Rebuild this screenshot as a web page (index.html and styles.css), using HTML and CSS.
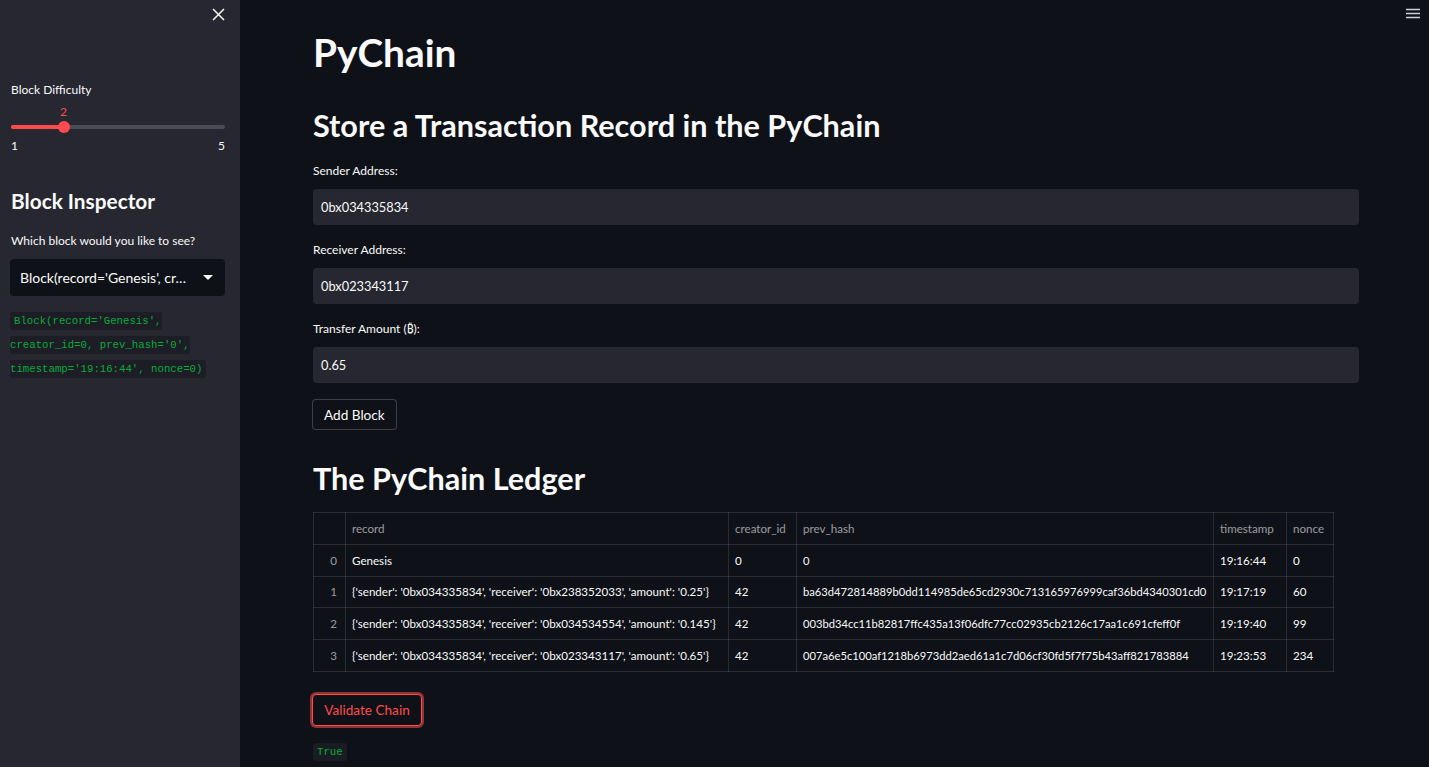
FILE: index.html
```html
<!DOCTYPE html>
<html>
<head>
<meta charset="utf-8">
<link rel="stylesheet" href="styles.css">
</head>
<body>
<div class="app">
  <aside class="sidebar">
    <div class="side-top">
      <svg class="close" width="13" height="13" viewBox="0 0 13 13"><path d="M1 1 L12 12 M12 1 L1 12" stroke="#fafafa" stroke-width="1.5" fill="none"/></svg>
    </div>
    <div class="label">Block Difficulty</div>
    <div class="slider">
      <div class="slider-value">2</div>
      <div class="track"><div class="fill"></div><div class="thumb"></div></div>
      <div class="ticks"><span>1</span><span>5</span></div>
    </div>
    <h3 class="side-h">Block Inspector</h3>
    <div class="label">Which block would you like to see?</div>
    <div class="select">
      <span class="select-text">Block(record='Genesis', cr…</span>
      <svg width="10" height="6" viewBox="0 0 10 6"><path d="M0 0 L10 0 L5 5 Z" fill="#fafafa"/></svg>
    </div>
    <div class="side-code"><code class="inline-code">Block(record='Genesis', creator_id=0, prev_hash='0', timestamp='19:16:44', nonce=0)</code></div>
  </aside>
  <main class="main">
    <svg class="menu" width="14" height="11" viewBox="0 0 14 11"><path d="M0 1.5 H14 M0 5.5 H14 M0 9.5 H14" stroke="#cfd0d3" stroke-width="1.6"/></svg>
    <div class="content">
      <h1 class="title">PyChain</h1>
      <h2 class="h2">Store a Transaction Record in the PyChain</h2>
      <div class="field first">
        <div class="label">Sender Address:</div>
        <div class="input">0bx034335834</div>
      </div>
      <div class="field">
        <div class="label">Receiver Address:</div>
        <div class="input">0bx023343117</div>
      </div>
      <div class="field">
        <div class="label">Transfer Amount (₿):</div>
        <div class="input">0.65</div>
      </div>
      <button class="btn">Add Block</button>
      <h2 class="h2 ledger">The PyChain Ledger</h2>
      <table class="df">
        <colgroup>
          <col class="w-idx"><col class="w-rec"><col class="w-cid"><col class="w-hash"><col class="w-ts"><col class="w-n">
        </colgroup>
        <thead>
          <tr><th class="idx"></th><th>record</th><th>creator_id</th><th>prev_hash</th><th>timestamp</th><th>nonce</th></tr>
        </thead>
        <tbody>
          <tr><td class="idx">0</td><td>Genesis</td><td>0</td><td class="hash">0</td><td>19:16:44</td><td>0</td></tr>
          <tr><td class="idx">1</td><td>{'sender': '0bx034335834', 'receiver': '0bx238352033', 'amount': '0.25'}</td><td>42</td><td class="hash">ba63d472814889b0dd114985de65cd2930c713165976999caf36bd4340301cd0</td><td>19:17:19</td><td>60</td></tr>
          <tr><td class="idx">2</td><td>{'sender': '0bx034335834', 'receiver': '0bx034534554', 'amount': '0.145'}</td><td>42</td><td class="hash">003bd34cc11b82817ffc435a13f06dfc77cc02935cb2126c17aa1c691cfeff0f</td><td>19:19:40</td><td>99</td></tr>
          <tr><td class="idx">3</td><td>{'sender': '0bx034335834', 'receiver': '0bx023343117', 'amount': '0.65'}</td><td>42</td><td class="hash">007a6e5c100af1218b6973dd2aed61a1c7d06cf30fd5f7f75b43aff821783884</td><td>19:23:53</td><td>234</td></tr>
        </tbody>
      </table>
      <button class="btn btn-focus">Validate Chain</button>
      <div class="result"><code class="inline-code">True</code></div>
    </div>
  </main>
</div>
</body>
</html>
```
FILE: styles.css
```css
* { box-sizing: border-box; }
html, body { margin: 0; padding: 0; height: 100%; }
body {
  background: #0e1117;
  color: #fafafa;
  font-family: Lato, "Noto Sans", sans-serif;
  overflow: hidden;
}
.app { display: flex; height: 767px; }
.sidebar {
  width: 240px;
  flex: 0 0 240px;
  background: #262730;
  padding: 0 15px 0 10px;
}
.side-top { display: flex; justify-content: flex-end; padding: 8px 0 0 0; height: 82px; }
.label { font-size: 12px; line-height: 16px; color: #fafafa; }
.sidebar .label { padding-left: 1px; }
.slider { margin-top: 7px; }
.slider-value { color: #ff4b4b; font-size: 12px; line-height: 14px; padding-left: 50px; }
.track { position: relative; height: 4px; background: #4a4b55; border-radius: 2px; margin: 6px 0 0 1px; }
.fill { width: 53px; height: 4px; background: #ff4b4b; border-radius: 2px; }
.thumb { position: absolute; left: 47px; top: -4px; width: 12px; height: 12px; border-radius: 50%; background: #ff4b4b; }
.ticks { display: flex; justify-content: space-between; font-size: 12px; margin-top: 10px; padding-left: 1px; line-height: 14px; }
.side-h { font-size: 20.8px; font-weight: 700; margin: 36px 0 20px 1px; line-height: 24px; }
.select {
  margin-top: 10px;
  height: 37px;
  background: #0e1117;
  border-radius: 4px;
  display: flex;
  align-items: center;
  justify-content: space-between;
  padding: 0 12px 0 10px;
  font-size: 14px;
}
.side-code { margin-top: 13px; line-height: 24px; font-size: 10.7px; font-family: "Liberation Mono", "DejaVu Sans Mono", monospace; }
.inline-code {
  font-family: "Liberation Mono", "DejaVu Sans Mono", monospace;
  font-size: 10.7px;
  color: #09ab3b;
  background: #1a1c24;
  padding: 3px 4px;
  border-radius: 3px;
}
.side-code .inline-code { background: #1c1d25; }
.main { flex: 1; position: relative; }
.menu { position: absolute; right: 9px; top: 8px; }
.content { padding: 0 70px 0 73px; }
.title { font-size: 38.8px; font-weight: 700; margin: 0; padding-top: 29px; line-height: 46px; }
.h2 { font-size: 30.6px; font-weight: 700; margin: 0; line-height: 36px; }
.title + .h2 { margin-top: 33px; }
.field { margin-top: 17px; }
.field.first { margin-top: 19px; }
.input {
  margin-top: 10px;
  height: 36px;
  background: #262730;
  border-radius: 4px;
  padding: 0 8px;
  display: flex;
  align-items: center;
  font-size: 12.8px;
}
.btn {
  font-family: inherit;
  margin-top: 16px;
  display: block;
  background: #0e1117;
  color: #fafafa;
  border: 1px solid rgba(250,250,250,0.2);
  border-radius: 4px;
  font-size: 13.6px;
  height: 31px;
  padding: 0 11px;
  margin-left: -1px;
}
.ledger { margin-top: 31px; }
.df {
  margin-top: 15px;
  border-collapse: collapse;
  table-layout: fixed;
  width: 1020px;
  font-size: 11.6px;
  border: 1px solid rgba(250,250,250,0.12);
}
.w-idx { width: 32px; }
.w-rec { width: 383px; }
.w-cid { width: 68px; }
.w-hash { width: 417px; }
.w-ts { width: 73px; }
.w-n { width: 47px; }
.df th, .df td {
  border: 1px solid rgba(250,250,250,0.12);
  height: 31.8px;
  padding: 0 2px 0 6px;
  text-align: left;
  white-space: nowrap;
  overflow: hidden;
}
.df th { font-weight: 400; color: rgba(250,250,250,0.6); }
.df td { color: #fafafa; }
.df td.hash { font-size: 11.2px; }
.df .idx { color: rgba(250,250,250,0.6); text-align: right; padding: 0 8px; }
.btn-focus {
  margin-top: 22px;
  color: #ff4b4b;
  border: 1px solid #ff4b4b;
  box-shadow: 0 0 0 2px rgba(255,75,75,0.55);
  height: 32px;
  width: 110px;
  padding: 0;
}
.result { margin-top: 15px; line-height: 16px; }
```
